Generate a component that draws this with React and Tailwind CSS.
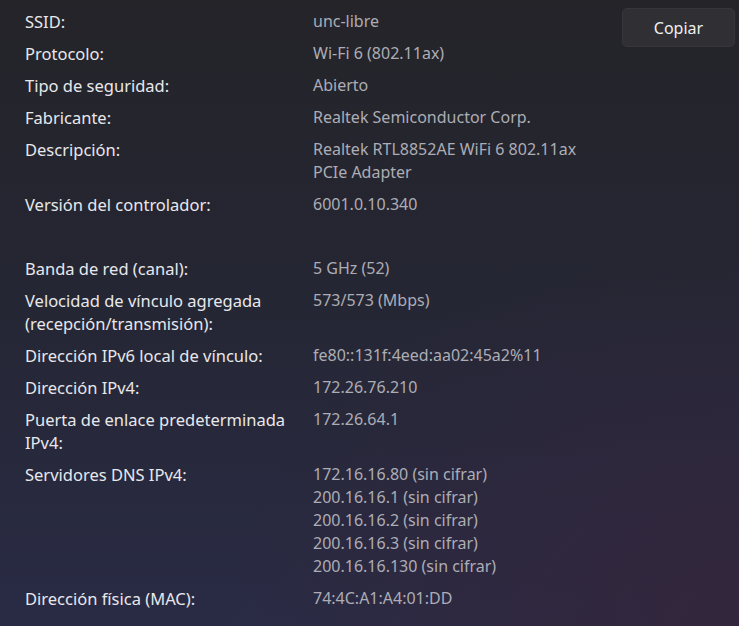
export default function App() {
  const rows = [
    ["SSID:", ["unc-libre"]],
    ["Protocolo:", ["Wi-Fi 6 (802.11ax)"]],
    ["Tipo de seguridad:", ["Abierto"]],
    ["Fabricante:", ["Realtek Semiconductor Corp."]],
    ["Descripción:", ["Realtek RTL8852AE WiFi 6 802.11ax PCIe Adapter"]],
    ["Versión del controlador:", ["6001.0.10.340"]],
    null,
    ["Banda de red (canal):", ["5 GHz (52)"]],
    ["Velocidad de vínculo agregada (recepción/transmisión):", ["573/573 (Mbps)"]],
    ["Dirección IPv6 local de vínculo:", ["fe80::131f:4eed:aa02:45a2%11"]],
    ["Dirección IPv4:", ["172.26.76.210"]],
    ["Puerta de enlace predeterminada IPv4:", ["172.26.64.1"]],
    [
      "Servidores DNS IPv4:",
      [
        "172.16.16.80 (sin cifrar)",
        "200.16.16.1 (sin cifrar)",
        "200.16.16.2 (sin cifrar)",
        "200.16.16.3 (sin cifrar)",
        "200.16.16.130 (sin cifrar)",
      ],
    ],
    ["Dirección física (MAC):", ["74:4C:A1:A4:01:DD"]],
  ];
  return (
    <div
      className="w-[739px] h-[626px] overflow-hidden flex bg-[radial-gradient(ellipse_70%_60%_at_100%_100%,#33263c_0%,rgba(51,38,60,0)_100%),linear-gradient(to_bottom,#242429_0%,#252633_45%,#292b45_100%)]"
      style={{ fontFamily: '"Segoe UI", "Noto Sans", "Open Sans", sans-serif' }}
    >
      <div className="flex flex-col gap-[9px] pt-[10px] pl-[25px] text-[16px] leading-[23px]">
        {rows.map((r, i) =>
          r === null ? (
            <div key={i} className="h-[23px]" />
          ) : (
            <div key={i} className="flex">
              <div className="w-[288px] pr-[20px] text-[16.5px] text-[#e8e8ec]">{r[0]}</div>
              <div className="w-[280px] text-[#adadb5]">
                {r[1].map((v, j) => (
                  <div key={j}>{v}</div>
                ))}
              </div>
            </div>
          )
        )}
      </div>
      <div className="flex-1 flex justify-end pt-[8px] pr-[4px]">
        <button className="w-[113px] h-[39px] rounded-[5px] bg-[#2f2f34] border border-[#36363b] text-[#f0f0f0] text-[16px]">
          Copiar
        </button>
      </div>
    </div>
  );
}
